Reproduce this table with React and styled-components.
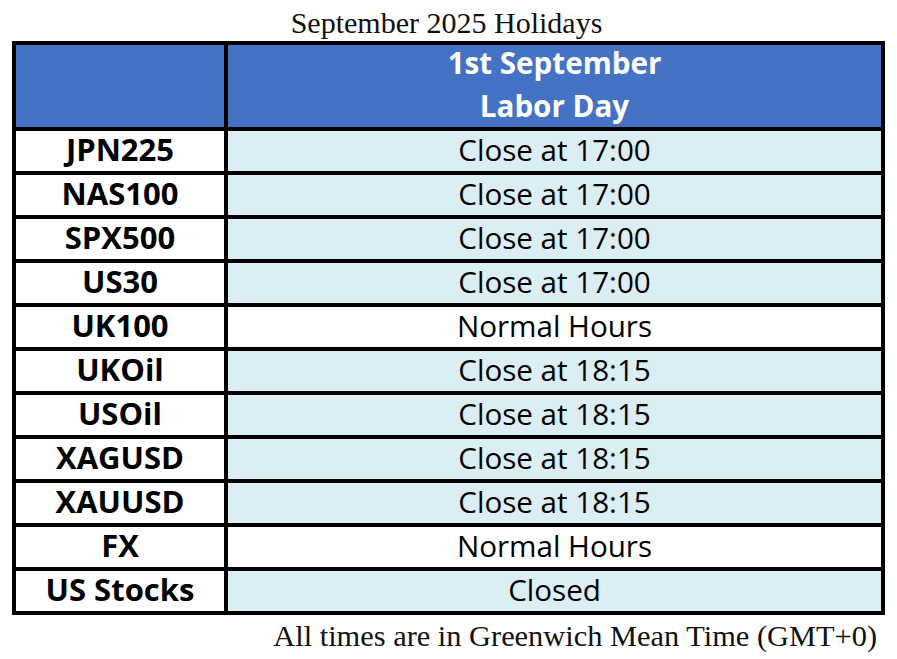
import React from 'react';
import styled, { createGlobalStyle } from 'styled-components';

const GlobalStyle = createGlobalStyle`
    html, body {
        margin: 0;
        padding: 0;
        background: #ffffff;
    }
`;

const Page = styled.div`
    width: 873px;
    margin-left: 12px;
    display: flex;
    flex-direction: column;
`;

const Title = styled.div`
    height: 41px;
    line-height: 46px;
    text-align: center;
    padding-right: 4px;
    font-family: "Liberation Serif", "Times New Roman", serif;
    font-size: 30px;
    color: #111;
    overflow: hidden;
`;

const Grid = styled.div`
    display: grid;
    grid-template-columns: 208px 653px;
    grid-auto-rows: 40px;
    grid-template-rows: 82px;
    gap: 4px;
    padding: 4px;
    background: #000;
`;

const Cell = styled.div`
    display: flex;
    align-items: center;
    justify-content: center;
    padding-bottom: 4px;
    font-family: "Open Sans", "Noto Sans", sans-serif;
    font-size: 29.6px;
    color: #000;
    background: ${p => (p.$shade ? '#daeef3' : '#ffffff')};
    white-space: nowrap;
`;

const Label = styled(Cell)`
    font-weight: 700;
    font-size: 31px;
    background: #ffffff;
`;

const HeadCell = styled.div`
    background: #4472c4;
    color: #fff;
    font-family: "Open Sans", "Noto Sans", sans-serif;
    font-weight: 700;
    font-size: 29.6px;
    line-height: 43px;
    padding-bottom: 4px;
    display: flex;
    flex-direction: column;
    align-items: center;
    justify-content: center;
`;

const Footer = styled.div`
    text-align: right;
    padding-right: 8px;
    font-family: "Liberation Serif", "Times New Roman", serif;
    font-size: 30.4px;
    line-height: 42px;
    color: #111;
`;

const rows = [
    ['JPN225', 'Close at 17:00', true],
    ['NAS100', 'Close at 17:00', true],
    ['SPX500', 'Close at 17:00', true],
    ['US30', 'Close at 17:00', true],
    ['UK100', 'Normal Hours', false],
    ['UKOil', 'Close at 18:15', true],
    ['USOil', 'Close at 18:15', true],
    ['XAGUSD', 'Close at 18:15', true],
    ['XAUUSD', 'Close at 18:15', true],
    ['FX', 'Normal Hours', false],
    ['US Stocks', 'Closed', true],
];

const App = () => {
    return (
        <Page>
            <GlobalStyle />
            <Title>September 2025 Holidays</Title>
            <Grid>
                <HeadCell />
                <HeadCell>
                    <span>1st September</span>
                    <span>Labor Day</span>
                </HeadCell>
                {rows.map(([name, status, shade]) => (
                    <React.Fragment key={name}>
                        <Label>{name}</Label>
                        <Cell $shade={shade}>{status}</Cell>
                    </React.Fragment>
                ))}
            </Grid>
            <Footer>All times are in Greenwich Mean Time (GMT+0)</Footer>
        </Page>
    );
};

export default App;
